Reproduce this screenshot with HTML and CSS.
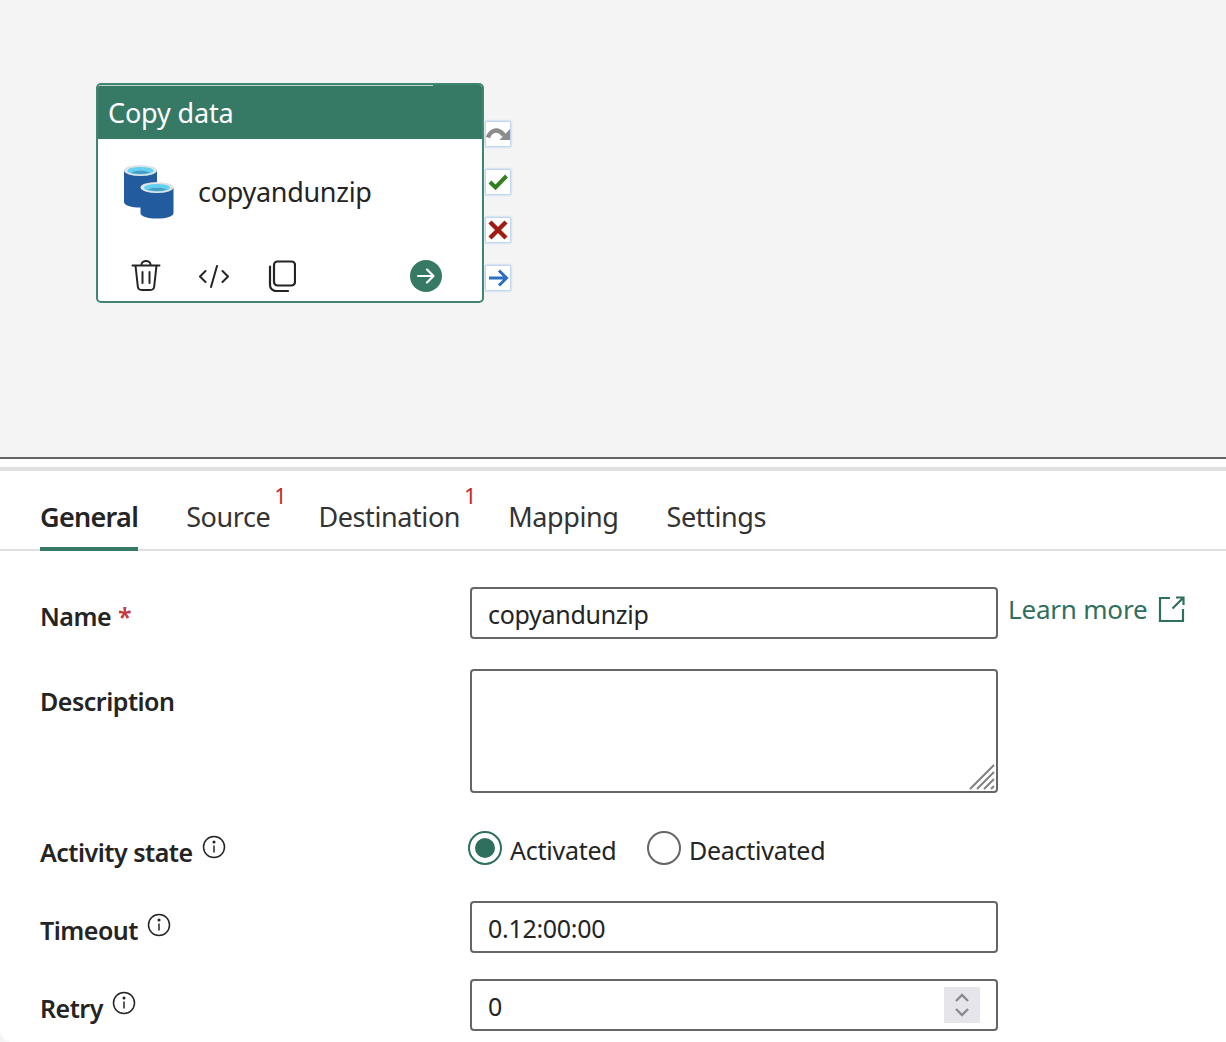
FILE: index.html
```html
<!DOCTYPE html>
<html lang="en">
<head>
<meta charset="utf-8">
<title>Copy data</title>
<link rel="stylesheet" href="styles.css">
</head>
<body>
<div class="app">
  <section class="canvas">
    <div class="node">
      <div class="card">
        <div class="card-head">Copy data</div>
        <div class="card-body">
          <svg class="db-icon" width="50" height="56" viewBox="0 0 50 56">
            <path fill="#225b9e" d="M0 8v31c0 3.500 7 5.500 16.500 5.500S33 42.500 33 39V8z"/>
            <ellipse cx="16.500" cy="7.500" rx="16.500" ry="5.500" fill="#dfe3e6"/>
            <ellipse cx="16.500" cy="7.800" rx="13" ry="3.800" fill="#62d1f2"/>
            <path fill="#4b9cc2" d="M7 9.600c2.500-1.300 5.800-1.800 9.500-1.800s7 .5 9.500 1.800c-2.500.9-5.700 1.300-9.500 1.300s-7-.4-9.500-1.300z"/>
            <path fill="#225b9e" d="M16.500 25v25c0 3.500 7 5.500 16.500 5.500S49.500 53.500 49.500 50V25z"/>
            <ellipse cx="33" cy="24.500" rx="16.500" ry="5.500" fill="#dfe3e6"/>
            <ellipse cx="33" cy="24.800" rx="13" ry="3.800" fill="#62d1f2"/>
            <path fill="#4b9cc2" d="M23.500 26.600c2.500-1.300 5.800-1.800 9.500-1.800s7 .5 9.500 1.800c-2.500.9-5.700 1.300-9.500 1.300s-7-.4-9.500-1.300z"/>
          </svg>
          <span class="card-name">copyandunzip</span>
        </div>
        <div class="card-actions">
          <svg class="act act-trash" width="30" height="32" viewBox="0 0 30 32" fill="none" stroke="#242424" stroke-width="2" stroke-linecap="round" stroke-linejoin="round">
            <path d="M1.500 5.500h27M10.500 5.500V4.500a4.500 3.500 0 0 1 9 0v1M4.500 5.500l2.300 21a4 4 0 0 0 4 3.500h8.400a4 4 0 0 0 4-3.500l2.300-21M11.500 12v11M18.500 12v11"/>
          </svg>
          <svg class="act act-code" width="32" height="24" viewBox="0 0 32 24" fill="none" stroke="#242424" stroke-width="2" stroke-linecap="round" stroke-linejoin="round">
            <path d="M7.500 7 2 12.500 7.500 18M24.500 7 30 12.500 24.500 18M19 2l-6 21"/>
          </svg>
          <svg class="act act-copy" width="28" height="32" viewBox="0 0 28 32" fill="none" stroke="#242424" stroke-width="2.200" stroke-linecap="round" stroke-linejoin="round">
            <rect x="6" y="1.500" width="21" height="24" rx="3.500"/>
            <path d="M2 6.500v18.500a6 6 0 0 0 6 6h12"/>
          </svg>
          <svg class="act-go" width="32" height="32" viewBox="0 0 32 32">
            <circle cx="16" cy="16" r="16" fill="#367a66"/>
            <path d="M8 16h15M17 9.500l6.500 6.500-6.500 6.500" fill="none" stroke="#fff" stroke-width="2.200" stroke-linecap="round" stroke-linejoin="round"/>
          </svg>
        </div>
      </div>
      <div class="ports">
        <div class="port">
          <svg width="24" height="24" viewBox="0 0 24 24"><path d="M2 15.500C3.500 10.500 7.500 8 11 8.500s5.500 2.500 7 5" fill="none" stroke="#8c8c8c" stroke-width="4.400"/><path d="M24 7v11H13.500z" fill="#8c8c8c"/></svg>
        </div>
        <div class="port">
          <svg width="24" height="24" viewBox="0 0 24 24"><path d="M4 12l5.500 5.500L20.500 6" fill="none" stroke="#33801f" stroke-width="4"/></svg>
        </div>
        <div class="port">
          <svg width="24" height="24" viewBox="0 0 24 24"><path d="M4 4l16 16M20 4 4 20" fill="none" stroke="#a01b12" stroke-width="4.400"/></svg>
        </div>
        <div class="port">
          <svg width="24" height="24" viewBox="0 0 24 24"><path d="M3 12h17M13 4.500 20.500 12 13 19.500" fill="none" stroke="#2c6fc0" stroke-width="3"/></svg>
        </div>
      </div>
    </div>
  </section>
  <section class="panel">
    <nav class="tabs">
      <div class="tab tab-active">General</div>
      <div class="tab">Source<sup class="badge">1</sup></div>
      <div class="tab">Destination<sup class="badge">1</sup></div>
      <div class="tab">Mapping</div>
      <div class="tab">Settings</div>
    </nav>
    <form class="form">
      <div class="row row-name">
        <div class="label">Name <span class="req">*</span></div>
        <input class="field" type="text" value="copyandunzip">
        <a class="learn">Learn more
          <svg width="27" height="26" viewBox="0 0 27 26" fill="none" stroke="#2f6f5e" stroke-width="2.200"><path d="M12 2H2v23h23V13M14.500 12.500 25 2M18 1.500h7.500V9"/></svg>
        </a>
      </div>
      <div class="row row-desc">
        <div class="label">Description</div>
        <div class="area">
          <textarea class="field field-area"></textarea>
          <svg class="grip" width="26" height="26" viewBox="0 0 26 26" stroke="#808080" stroke-width="2"><path d="M1 25 25 1M8 25 25 8M15 25 25 15M22 25 25 22"/></svg>
        </div>
      </div>
      <div class="row row-state">
        <div class="label">Activity state
          <svg class="info" width="24" height="24" viewBox="0 0 24 24" fill="none" stroke="#242424" stroke-width="1.500"><circle cx="12" cy="12" r="10.500"/><path d="M12 10.500v7"/><circle cx="12" cy="7" r=".8" fill="#242424"/></svg>
        </div>
        <div class="radios">
          <label class="radio"><span class="dot dot-on"></span><span class="radio-text">Activated</span></label>
          <label class="radio"><span class="dot"></span><span class="radio-text">Deactivated</span></label>
        </div>
      </div>
      <div class="row row-timeout">
        <div class="label">Timeout
          <svg class="info" width="24" height="24" viewBox="0 0 24 24" fill="none" stroke="#242424" stroke-width="1.500"><circle cx="12" cy="12" r="10.500"/><path d="M12 10.500v7"/><circle cx="12" cy="7" r=".8" fill="#242424"/></svg>
        </div>
        <input class="field" type="text" value="0.12:00:00">
      </div>
      <div class="row row-retry">
        <div class="label">Retry
          <svg class="info" width="24" height="24" viewBox="0 0 24 24" fill="none" stroke="#242424" stroke-width="1.500"><circle cx="12" cy="12" r="10.500"/><path d="M12 10.500v7"/><circle cx="12" cy="7" r=".8" fill="#242424"/></svg>
        </div>
        <div class="area">
          <input class="field" type="text" value="0">
          <div class="spin">
            <svg width="16" height="28" viewBox="0 0 16 28" fill="none" stroke="#8a8a94" stroke-width="2.400"><path d="M2 10l6-6 6 6M2 18l6 6 6-6"/></svg>
          </div>
        </div>
      </div>
    </form>
  </section>
</div>
</body>
</html>
```

FILE: styles.css
```css
* { box-sizing: border-box; }
html, body { margin: 0; padding: 0; }
body {
  width: 1226px;
  height: 1042px;
  overflow: hidden;
  background: #f4f4f4;
  font-family: "Noto Sans", "Open Sans", sans-serif;
  color: #242424;
}
.app { display: flex; flex-direction: column; height: 1042px; }
.canvas {
  position: relative;
  height: 459px;
  background: #f4f4f4;
  border-bottom: 2px solid #666;
}
.node { position: absolute; left: 96px; top: 83px; display: flex; }
.card {
  width: 388px;
  height: 220px;
  border: 2px solid #3f8571;
  border-radius: 5px;
  background: #fff;
  overflow: hidden;
  display: flex;
  flex-direction: column;
}
.card-head {
  height: 54px;
  background: linear-gradient(#bcd2cb, #bcd2cb) no-repeat 0 0 / 335px 1px, #367a66;
  color: #fff;
  font-size: 27px;
  line-height: 56px;
  padding-left: 10px;
  letter-spacing: -0.15px;
}
.card-body { display: flex; align-items: center; height: 104px; padding-left: 26px; }
.card-name { margin-left: 24px; font-size: 27px; letter-spacing: -0.3px; }
.card-actions { display: flex; align-items: center; padding: 8px 0 0 33px; height: 58px; }
.act-trash { margin-right: 37px; }
.act-code { margin-right: 38px; }
.act-copy { margin-right: 114px; }
.ports { display: flex; flex-direction: column; gap: 24px; margin-top: 39px; margin-left: 2px; }
.port {
  width: 24px;
  height: 24px;
  background: #fff;
  box-shadow: 0 0 2px 1px #a9c8ee;
}
.port svg { display: block; }
.panel {
  flex: 1;
  background: #fff;
  border-bottom-left-radius: 12px;
  padding-top: 8px;
}
.tabs {
  display: flex;
  gap: 48px;
  height: 84px;
  padding-left: 40px;
  border-top: 4px solid #e0e0e0;
  border-bottom: 2px solid #e0e0e0;
}
.tab {
  position: relative;
  font-size: 27px;
  line-height: 92px;
  height: 80px;
  letter-spacing: -0.4px;
  color: #333;
}
.tab-active { font-weight: 600; letter-spacing: -0.7px; color: #242424; border-bottom: 4px solid #367a66; }
.badge {
  position: absolute;
  right: -16px;
  top: 14px;
  font-size: 21px;
  line-height: 22px;
  color: #c4222a;
  letter-spacing: 0;
}
.form { padding-left: 40px; }
.row { display: flex; align-items: flex-start; }
.row-name { margin-top: 36px; height: 52px; }
.row-desc { margin-top: 30px; height: 124px; }
.row-state { margin-top: 38px; height: 38px; }
.row-timeout { margin-top: 32px; height: 52px; }
.row-retry { margin-top: 26px; height: 52px; }
.label {
  width: 430px;
  flex: none;
  display: flex;
  font-size: 25px;
  font-weight: 600;
  line-height: 34px;
  letter-spacing: -0.5px;
  color: #242424;
  padding-top: 12px;
}
.row-desc .label { padding-top: 15px; }
.row-state .label { padding-top: 4px; }
.req { color: #c4373d; margin-left: 7px; }
.info { margin-left: 9px; }
.field {
  display: block;
  width: 528px;
  height: 52px;
  border: 2px solid #666;
  border-radius: 4px;
  background: #fff;
  padding: 2px 16px 0;
  font: 400 25px "Noto Sans", "Open Sans", sans-serif;
  letter-spacing: -0.3px;
  color: #242424;
  outline: none;
}
.field-area { height: 124px; resize: none; }
.area { position: relative; width: 528px; }
.grip { position: absolute; right: 3px; bottom: 3px; }
.spin {
  position: absolute;
  right: 18px;
  top: 8px;
  width: 36px;
  height: 36px;
  background: #e6e6ea;
  display: flex;
  align-items: center;
  justify-content: center;
}
.learn {
  display: flex;
  align-items: center;
  gap: 11px;
  margin-left: 10px;
  margin-top: 6px;
  height: 32px;
  font-size: 26px;
  letter-spacing: -0.2px;
  color: #2f6f5e;
}
.radios { display: flex; gap: 30.500px; margin-left: -2px; }
.radio { display: flex; align-items: center; gap: 8px; font-size: 25px; letter-spacing: -0.25px; height: 34px; color: #242424; }
.radio-text { padding-top: 4px; }
.dot {
  width: 34px;
  height: 34px;
  border: 2px solid #666;
  border-radius: 50%;
  background: #fff;
  display: flex;
  align-items: center;
  justify-content: center;
}
.dot-on { border-color: #2f6f5e; }
.dot-on::after { content: ""; width: 20px; height: 20px; border-radius: 50%; background: #2f6f5e; }
```
